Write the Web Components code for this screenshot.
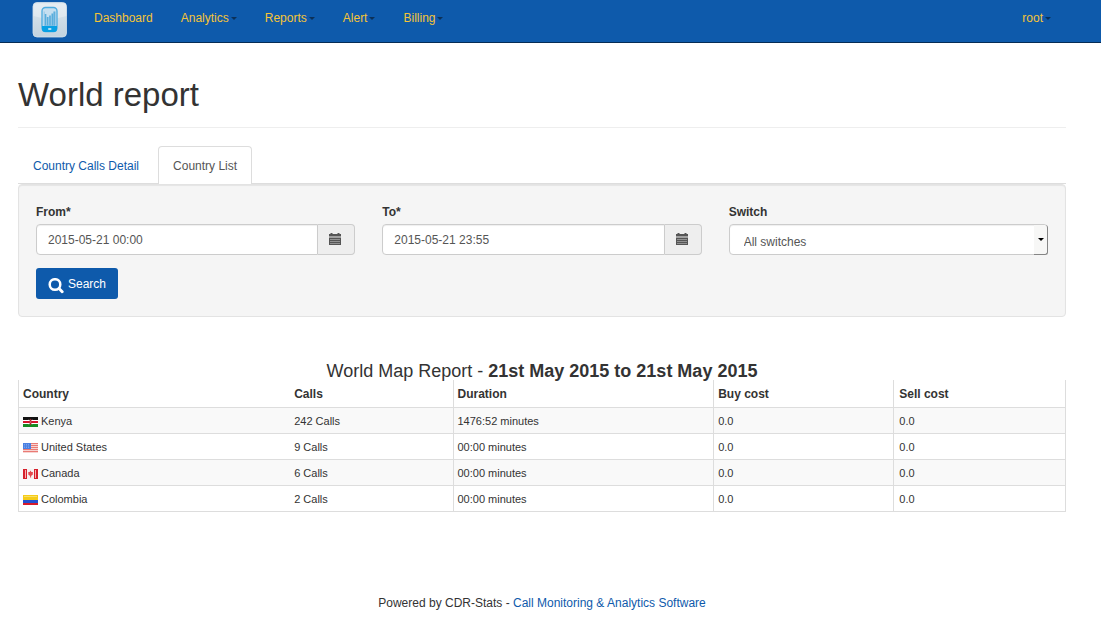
<!DOCTYPE html>
<html lang="en">
<head>
<meta charset="utf-8">
<title>World report</title>
<style>
body{margin:0;background:#fff;color:#333;font:12px/17px "Liberation Sans",Arial,sans-serif;--brand:#0e5aab;--line:#ddd}
</style>
</head>
<body>
<cdr-navbar></cdr-navbar>
<cdr-page>
  <span slot="title">World report</span>
  <cdr-tabs></cdr-tabs>
  <cdr-search></cdr-search>
  <cdr-report>World Map Report - <b>21st May 2015 to 21st May 2015</b></cdr-report>
  <cdr-footer slot="footer"></cdr-footer>
</cdr-page>
<script>
function define(name, html, setup) {
  customElements.define(name, class extends HTMLElement {
    constructor() {
      super();
      const root = this.attachShadow({mode: 'open'});
      root.innerHTML = html;
      if (setup) setup(root, this);
    }
  });
}

define('cdr-nav-link', `
<style>
:host{display:block}
a{display:flex;align-items:center;gap:2px;color:#f5c437;text-decoration:none}
i{border:3px solid transparent;border-top-color:#0b3058;border-bottom:0}
:host([plain]) i{display:none}
</style>
<a href="#"><slot></slot><i></i></a>`);

define('cdr-navbar', `
<style>
:host{display:block;background:var(--brand);border-bottom:1px solid #062c55}
nav{display:flex;align-items:flex-start;gap:28px;height:42px;padding:0 50px 0 32px;box-sizing:border-box}
.logo{display:block;padding-top:2px;height:36px}
svg{display:block}
cdr-nav-link{padding-top:10px}
.logo{margin-right:-1px}
.user{margin-left:auto}
</style>
<nav aria-label="Main">
  <a class="logo" href="#" aria-label="Home">
    <svg width="35" height="36" viewBox="0 0 35 36">
      <defs><linearGradient id="g" x1="0" y1="0" x2="0" y2="1"><stop offset="0" stop-color="#dbe6ee"/><stop offset="1" stop-color="#c3d3df"/></linearGradient></defs>
      <rect x="1" y=".5" width="33.500" height="34.500" rx="4" fill="url(#g)" stroke="#d5e2ec" stroke-width=".8"/>
      <path d="M1.500 4.500a3 3 0 0 1 3-3h27a3 3 0 0 1 3 3v9.500q-16 5-33 0z" fill="#fff" opacity=".3"/>
      <rect x="10" y="5.500" width="15" height="24" rx="3.500" fill="#c5dff0" stroke="#4cabdf" stroke-width="1.300"/>
      <path d="M10 24h15v3a3 3 0 0 1-3 3h-9a3 3 0 0 1-3-3z" fill="#08a0e4"/>
      <path d="M13.500 12v12M15.700 15v9M18 13.500v10.500M20.300 11.500v12.500M22.300 9.500v14.500" stroke="#58addc" stroke-width="1.700"/>
      <path d="M12.200 9.500v14h11v-14" stroke="#7fbfe2" fill="none" stroke-width=".7"/>
      <rect x="16" y="26.200" width="3.500" height="1.600" rx=".8" fill="#e9f5fb"/>
    </svg>
  </a>
  <cdr-nav-link plain>Dashboard</cdr-nav-link>
  <cdr-nav-link>Analytics</cdr-nav-link>
  <cdr-nav-link>Reports</cdr-nav-link>
  <cdr-nav-link>Alert</cdr-nav-link>
  <cdr-nav-link>Billing</cdr-nav-link>
  <cdr-nav-link class="user">root</cdr-nav-link>
</nav>`);

define('cdr-page', `
<style>
:host{display:block;padding:32px 35px 0 18px}
h1{margin:0 0 18px;padding-bottom:12px;border-bottom:1px solid #eee;font-size:33px;line-height:40px;font-weight:400}
footer{margin-top:82px;text-align:center}
</style>
<main><h1><slot name="title"></slot></h1><slot></slot></main>
<footer><slot name="footer"></slot></footer>`);

define('cdr-tabs', `
<style>
:host{display:block}
nav{display:flex;gap:4px;border-bottom:1px solid var(--line)}
a{padding:11px 14px 9px;border:1px solid transparent;border-bottom:0;border-radius:4px 4px 0 0;margin-bottom:-1px;color:var(--brand);text-decoration:none}
a[aria-current]{background:#fff;border-color:var(--line);color:#555}
</style>
<nav aria-label="Report views"><a href="#">Country Calls Detail</a><a href="#" aria-current="page">Country List</a></nav>`);

define('cdr-date-field', `
<style>
:host{display:block}
label{display:block;font-weight:700;margin-bottom:3px}
.group{display:flex;height:31px}
input{flex:1;min-width:0;box-sizing:border-box;margin:0;padding:2px 11px 0;border:1px solid #ccc;border-radius:4px 0 0 4px;background:#fff;font:inherit;color:#555;box-shadow:inset 0 1px 1px #0001;outline:0}
button{width:37px;box-sizing:border-box;border:1px solid #ccc;border-left:0;border-radius:0 4px 4px 0;background:#eee;margin:0;padding:0 2px 1px 0;display:grid;place-items:center}
</style>
<label for="date"><slot></slot></label>
<div class="group"><input id="date" type="text">
<button type="button" aria-label="Open calendar"><svg width="12" height="13" viewBox="0 0 12 13"><path fill="#555" d="M1.500 0h2v1h5V0h2v1H12v2.500H0V1h1.500zM0 4.500h12V12H0z"/><path stroke="#eee" stroke-width=".8" stroke-dasharray="1 1" d="M1.500 6.500h9.500M1.500 8.500h9.500M1.500 10.500h9.500"/></svg></button></div>`,
(root, host) => { root.querySelector('input').value = host.getAttribute('value'); });

define('cdr-select-field', `
<style>
:host{display:block}
label{display:block;font-weight:700;margin-bottom:3px}
.group{display:grid;height:31px}
select,.arrow{grid-area:1/1}
select{appearance:none;width:100%;margin:0;padding:6px 15px 0 14px;border:1px solid #ccc;border-radius:4px;background:#fff;font:inherit;color:#555;box-shadow:inset 0 1px 1px #0001;outline:0}
.arrow{justify-self:end;width:14px;box-sizing:border-box;margin-top:1px;background:#f7f7f6;border:solid #858585;border-width:0 1px 1px 0;border-radius:0 3px 3px 0;display:grid;place-items:center;pointer-events:none}
.arrow i{border:3px solid transparent;border-top-color:#000;border-bottom:0}
</style>
<label for="choice"><slot></slot></label>
<div class="group"><select id="choice"><option>All switches</option></select><span class="arrow"><i></i></span></div>`);

define('cdr-search', `
<style>
:host{display:block}
form{padding:19px 17px 17px;background:#f5f5f5;border:1px solid #e3e3e3;border-radius:4px;box-shadow:inset 0 1px 1px #0001}
.fields{display:grid;grid-template-columns:repeat(3,minmax(0,1fr));gap:27px;margin-bottom:13px}
button{display:flex;align-items:center;gap:4px;height:31px;padding:2px 12px 0;border:0;border-radius:3px;background:var(--brand);color:#fff;font:inherit}
svg{display:block;margin-top:2px}
</style>
<form>
  <div class="fields">
    <cdr-date-field value="2015-05-21 00:00">From*</cdr-date-field>
    <cdr-date-field value="2015-05-21 23:55">To*</cdr-date-field>
    <cdr-select-field>Switch</cdr-select-field>
  </div>
  <button type="button"><svg width="16" height="16" viewBox="0 0 16 16" fill="none" stroke="#fff" aria-hidden="true"><circle cx="7" cy="6.500" r="5.300" stroke-width="2.500"/><path d="M11 10.500l3.200 3.300" stroke-width="2.900" stroke-linecap="round"/></svg>Search</button>
</form>`);

const FLAGS = {
  ke: '<path fill="#111" d="M0 0h15v3H0z"/><path fill="#fff" d="M0 3h15v4H0z"/><path fill="#d5142e" d="M0 4h15v2H0z"/><path fill="#168a22" d="M0 7h15v3H0z"/><path fill="#b5202c" d="M7.500 1.500l1.600 3.500-1.600 3.500L5.900 5z"/><path stroke="#e9b9bb" stroke-width=".3" d="M5.500 2l4 6m0-6l-4 6"/>',
  us: '<path fill="#f7d5d3" d="M0 0h15v10H0z"/><path stroke="#ea7a74" stroke-width="1" d="M0 .5h15M0 2.500h15M0 4.500h15M0 6.500h15M0 8.500h15"/><path fill="#4a80e2" d="M0 0h8v6H0z"/><path stroke="#a9c4f5" stroke-width=".5" stroke-dasharray="1 1" d="M1 1.500h6M1 3h6M1 4.500h6"/>',
  ca: '<path fill="#f6f0f0" d="M0 0h15v10H0z"/><path fill="#d6202b" d="M0 0h4v10H0zM11 0h4v10h-4z"/><path stroke="#f6b0b2" d="M2.500 1v8M12.500 1v8"/><path fill="#e4484d" d="M7.500 1.500l.9 1.500 1.600 0-.3 1.600.6.5-2.200 1.900v1.500h-1V7L4.900 5.100l.6-.5L5.200 3l1.500 0z"/>',
  co: '<path fill="#f5cc19" d="M0 0h15v5H0z"/><path fill="#f9e066" d="M1 1h13v1H1z"/><path fill="#2450cf" d="M0 5h15v3H0z"/><path fill="#d71a2a" d="M0 8h15v2H0z"/>'
};
const ROWS = [
  ['ke', 'Kenya', '242 Calls', '1476:52 minutes'],
  ['us', 'United States', '9 Calls', '00:00 minutes'],
  ['ca', 'Canada', '6 Calls', '00:00 minutes'],
  ['co', 'Colombia', '2 Calls', '00:00 minutes']
];

define('cdr-report', `
<style>
:host{display:block;margin-top:45px}
h2{margin:0;font-size:18px;line-height:18px;font-weight:400;text-align:center}
table{width:100%;table-layout:fixed;border-collapse:separate;border-spacing:0;border-right:1px solid var(--line)}
th,td{padding:5px 4px 3px;text-align:left;border-bottom:1px solid var(--line);border-left:1px solid var(--line);line-height:17px}
th{line-height:19px}
td{font-size:11px}
th:nth-child(2),td:nth-child(2){border-left:0;padding-left:5px}
th:nth-child(5),td:nth-child(5){padding-left:5px}
tbody tr:nth-child(odd) td{background:#f9f9f9}
.country{display:flex;align-items:center;gap:3px}
svg{display:block;margin-top:1px}
</style>
<h2><slot></slot></h2>
<table>
<colgroup><col style="width:25.900%"><col style="width:15.600%"><col style="width:24.900%"><col style="width:17.200%"><col></colgroup>
<thead><tr><th scope="col">Country</th><th scope="col">Calls</th><th scope="col">Duration</th><th scope="col">Buy cost</th><th scope="col">Sell cost</th></tr></thead>
<tbody>${ROWS.map(([flag, name, calls, time]) => `<tr><td><span class="country"><svg width="15" height="10" viewBox="0 0 15 10" aria-hidden="true">${FLAGS[flag]}</svg>${name}</span></td><td>${calls}</td><td>${time}</td><td>0.0</td><td>0.0</td></tr>`).join('')}</tbody>
</table>`);

define('cdr-footer', `
<style>:host{display:block;padding-top:1px}a{color:var(--brand);text-decoration:none}</style>
Powered by CDR-Stats - <a href="#">Call Monitoring &amp; Analytics Software</a>`);
</script>
</body>
</html>
